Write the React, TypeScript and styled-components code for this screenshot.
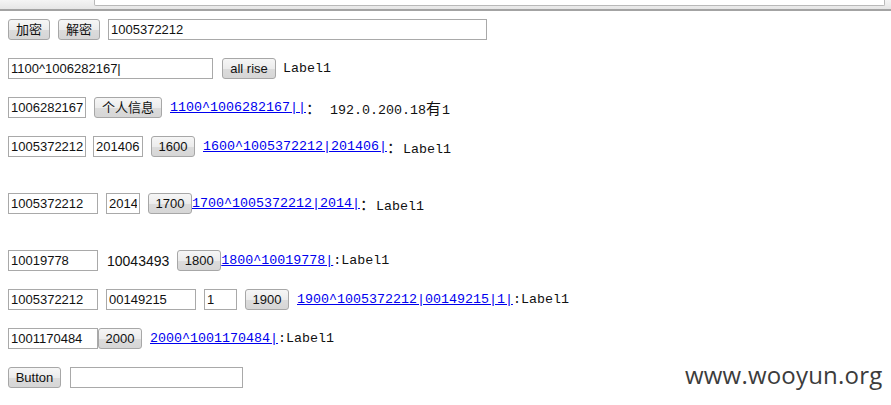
import styled, { createGlobalStyle } from 'styled-components'

const GlobalStyle = createGlobalStyle`
  html, body { margin: 0; padding: 0; background: #ffffff; }
  body { font-family: Arial, "Liberation Sans", "Noto Sans CJK SC", sans-serif; }
`

const Page = styled.div`
  position: relative;
  width: 891px;
  height: 405px;
  overflow: hidden;
  background: #ffffff;
`

const Chrome = styled.div`
  height: 9px;
  background: linear-gradient(#f4f4f4, #e6e6e6);
  border-bottom: 2px solid #a3a3a3;
  padding-left: 94px;
  padding-right: 6px;
`

const AddressBar = styled.div`
  height: 5px;
  background: #ffffff;
  border: 1px solid #b9b9b9;
  border-top: none;
  border-radius: 0 0 2px 2px;
`

const Form = styled.div`
  display: flex;
  flex-direction: column;
  padding: 8px 8px 0 8px;
`

const Row = styled.div<{ $top?: number }>`
  display: flex;
  align-items: center;
  height: 21px;
  margin-top: ${({ $top }) => $top ?? 18}px;
  &:first-child { margin-top: 0; }
`

const Field = styled.input<{ $w: number; $ml?: number }>`
  box-sizing: border-box;
  width: ${({ $w }) => $w}px;
  height: 21px;
  margin: 0 0 0 ${({ $ml }) => $ml ?? 0}px;
  padding: 0 2px;
  border: 1px solid #a9a9a9;
  background: #ffffff;
  font-family: Arial, "Liberation Sans", sans-serif;
  font-size: 13px;
  color: #111111;
  outline: none;
`

const Btn = styled.button<{ $w: number; $ml?: number }>`
  box-sizing: border-box;
  width: ${({ $w }) => $w}px;
  height: 21px;
  margin: 0 0 0 ${({ $ml }) => $ml ?? 0}px;
  padding: 0;
  border: 1px solid #a7a7a7;
  border-radius: 3px;
  background: linear-gradient(#f6f6f6 0%, #ececec 50%, #dcdcdc 51%, #d6d6d6 100%);
  font-family: Arial, "Liberation Sans", "Noto Sans CJK SC", sans-serif;
  font-size: 13px;
  color: #111111;
  line-height: 19px;
`

const Plain = styled.span<{ $ml?: number }>`
  margin-left: ${({ $ml }) => $ml ?? 0}px;
  font-family: Arial, "Liberation Sans", sans-serif;
  font-size: 14px;
  color: #111111;
`

const Link = styled.a<{ $ml?: number }>`
  margin-left: ${({ $ml }) => $ml ?? 0}px;
  font-family: "Liberation Mono", "Noto Sans CJK SC", monospace;
  font-size: 13.33px;
  color: #0000ee;
  text-decoration: underline;
  white-space: pre;
  cursor: pointer;
`

const Label = styled.span<{ $ml?: number }>`
  margin-left: ${({ $ml }) => $ml ?? 0}px;
  font-family: "Liberation Mono", "Noto Sans CJK SC", monospace;
  font-size: 13.33px;
  color: #111111;
  white-space: pre;
`

const Wide = styled.span`
  display: inline-block;
  width: 16px;
  font-family: "Noto Sans CJK SC", sans-serif;
  font-size: 15px;
  text-align: left;
`

const Watermark = styled.div`
  position: absolute;
  left: 685px;
  top: 359px;
  font-family: "Open Sans", "Noto Sans", sans-serif;
  font-size: 24px;
  line-height: 32px;
  color: #3c3c3c;
  letter-spacing: 0.2px;
`

export default function App() {
  return (
    <Page>
      <GlobalStyle />
      <Chrome>
        <AddressBar />
      </Chrome>
      <Form>
        <Row>
          <Btn $w={42}>加密</Btn>
          <Btn $w={42} $ml={8}>解密</Btn>
          <Field $w={379} $ml={8} defaultValue="1005372212" />
        </Row>

        <Row>
          <Field $w={205} defaultValue="1100^1006282167|" />
          <Btn $w={54} $ml={9}>all rise</Btn>
          <Label $ml={7}>Label1</Label>
        </Row>

        <Row>
          <Field $w={78} defaultValue="1006282167" />
          <Btn $w={68} $ml={8}>个人信息</Btn>
          <Link $ml={8}>1100^1006282167||</Link>
          <Label><Wide>：</Wide> 192.0.200.18<Wide>有</Wide>1</Label>
        </Row>

        <Row>
          <Field $w={78} defaultValue="1005372212" />
          <Field $w={50} $ml={7} defaultValue="201406" />
          <Btn $w={44} $ml={8}>1600</Btn>
          <Link $ml={8}>1600^1005372212|201406|</Link>
          <Label><Wide>：</Wide>Label1</Label>
        </Row>

        <Row $top={36}>
          <Field $w={90} defaultValue="1005372212" />
          <Field $w={34} $ml={8} defaultValue="2014" />
          <Btn $w={44} $ml={8}>1700</Btn>
          <Link>1700^1005372212|2014|</Link>
          <Label><Wide>：</Wide>Label1</Label>
        </Row>

        <Row $top={36}>
          <Field $w={90} defaultValue="10019778" />
          <Plain $ml={9}>10043493</Plain>
          <Btn $w={44} $ml={8}>1800</Btn>
          <Link>1800^10019778|</Link>
          <Label>:Label1</Label>
        </Row>

        <Row>
          <Field $w={90} defaultValue="1005372212" />
          <Field $w={90} $ml={8} defaultValue="00149215" />
          <Field $w={33} $ml={8} defaultValue="1" />
          <Btn $w={44} $ml={8}>1900</Btn>
          <Link $ml={8}>1900^1005372212|00149215|1|</Link>
          <Label>:Label1</Label>
        </Row>

        <Row>
          <Field $w={90} defaultValue="1001170484" />
          <Btn $w={44}>2000</Btn>
          <Link $ml={8}>2000^1001170484|</Link>
          <Label>:Label1</Label>
        </Row>

        <Row>
          <Btn $w={53}>Button</Btn>
          <Field $w={173} $ml={9} defaultValue="" />
        </Row>
      </Form>
      <Watermark>www.wooyun.org</Watermark>
    </Page>
  )
}
